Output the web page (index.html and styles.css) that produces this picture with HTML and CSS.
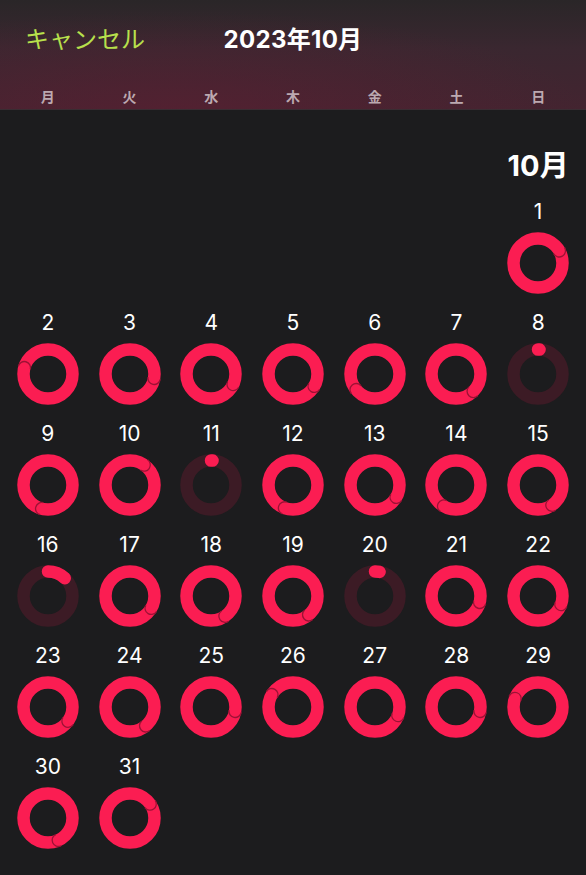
FILE: index.html
```html
<!DOCTYPE html>
<html lang="ja">
<head>
    <meta charset="UTF-8">
    <meta name="viewport" content="width=device-width, initial-scale=1.0">
    <title>2023年10月</title>
    <link rel="stylesheet" href="styles.css">
</head>
<body>
    <div class="cal-header">
        <div class="top-bar">
            <span class="cancel">キャンセル</span>
            <span class="title">2023年10月</span>
            <span></span>
        </div>
        <div class="weekdays">
            <span>月</span>
            <span>火</span>
            <span>水</span>
            <span>木</span>
            <span>金</span>
            <span>土</span>
            <span>日</span>
        </div>
    </div>

    <div class="month" id="month">
        <div class="month-label">10月</div>
    </div>

    <script>
        // seam = angle of the overlap end (full rings), p = progress for partial rings
        const days = [
            { seam: 60 }, { seam: 285 }, { seam: 100 }, { seam: 115 }, { seam: 120 },
            { seam: 230 }, { seam: 135 }, { p: 0.01 }, { seam: 195 }, { seam: 35 },
            { p: 0.01 }, { seam: 200 }, { seam: 120 }, { seam: 210 }, { seam: 145 },
            { p: 0.12 }, { seam: 120 }, { seam: 145 }, { seam: 140 }, { p: 0.03 },
            { seam: 105 }, { seam: 110 }, { seam: 125 }, { seam: 140 }, { seam: 100 },
            { seam: 300 }, { seam: 110 }, { seam: 100 }, { seam: 290 }, { seam: 155 },
            { seam: 55 }
        ];

        const month = document.getElementById('month');
        const R = 24.5;
        const W = 12.5;
        const C = 31;

        function point(angle, radius) {
            const a = angle * Math.PI / 180;
            return [C + radius * Math.sin(a), C - radius * Math.cos(a)];
        }

        function ring(day) {
            if (day.p !== undefined) {
                const end = Math.max(day.p * 360, 0.5);
                const s = point(0, R);
                const e = point(end, R);
                return `
                    <circle cx="${C}" cy="${C}" r="${R}" class="track"/>
                    <path d="M${s[0]} ${s[1]} A${R} ${R} 0 ${end > 180 ? 1 : 0} 1 ${e[0].toFixed(2)} ${e[1].toFixed(2)}" class="arc"/>`;
            }
            const inner = point(day.seam, R - W / 2);
            const outer = point(day.seam, R + W / 2);
            return `
                <circle cx="${C}" cy="${C}" r="${R}" class="full"/>
                <path d="M${inner[0].toFixed(2)} ${inner[1].toFixed(2)} A${W / 2} ${W / 2} 0 0 0 ${outer[0].toFixed(2)} ${outer[1].toFixed(2)}" class="seam"/>`;
        }

        days.forEach(function (day, i) {
            const cell = document.createElement('div');
            cell.className = 'day';
            if (i === 0) cell.classList.add('first');
            cell.innerHTML = `
                <span class="num">${i + 1}</span>
                <svg width="62" height="62" viewBox="0 0 62 62">${ring(day)}</svg>
            `;
            month.appendChild(cell);
        });
    </script>
</body>
</html>
```

FILE: styles.css
```css
body {
    margin: 0;
    background-color: #1c1c1e;
    color: #fff;
    font-family: Inter, "Noto Sans CJK JP", sans-serif;
}

.cal-header {
    height: 110px;
    background:
        radial-gradient(ellipse 70% 90% at 30% 100%, rgba(95, 30, 50, 0.55), transparent),
        linear-gradient(to bottom, #2a2628 0%, #3a2730 45%, #432430 100%);
    border-bottom: 1px solid #3a2d33;
    box-sizing: border-box;
}

.top-bar {
    display: grid;
    grid-template-columns: 1fr auto 1fr;
    align-items: center;
    height: 74px;
    padding: 0 25px;
}

.cancel {
    color: #b8e04c;
    font-size: 24px;
}

.title {
    font-size: 24px;
    font-weight: 700;
    letter-spacing: 0.3px;
}

.weekdays {
    display: grid;
    grid-template-columns: repeat(7, 1fr);
    padding: 14px 7px 0;
    text-align: center;
    font-size: 14px;
    line-height: 18px;
    font-weight: 600;
    color: #bca9b0;
}

.month {
    display: grid;
    grid-template-columns: repeat(7, 1fr);
    padding: 40px 7px 0;
}

.month-label {
    grid-column: 7;
    text-align: center;
    font-size: 29px;
    font-weight: 700;
    line-height: 32px;
    margin-bottom: 18px;
}

.day {
    display: flex;
    flex-direction: column;
    align-items: center;
    padding-bottom: 17px;
}

.day.first {
    grid-column-start: 7;
}

.num {
    font-size: 21px;
    line-height: 24px;
    margin-bottom: 8px;
}

svg circle,
svg path {
    fill: none;
}

.full {
    stroke: #fb1d52;
    stroke-width: 12.5;
}

.track {
    stroke: #3c1b25;
    stroke-width: 12.5;
}

.arc {
    stroke: #fb1d52;
    stroke-width: 12.5;
    stroke-linecap: round;
}

.seam {
    stroke: #9c1235;
    stroke-width: 1.3;
}
```
